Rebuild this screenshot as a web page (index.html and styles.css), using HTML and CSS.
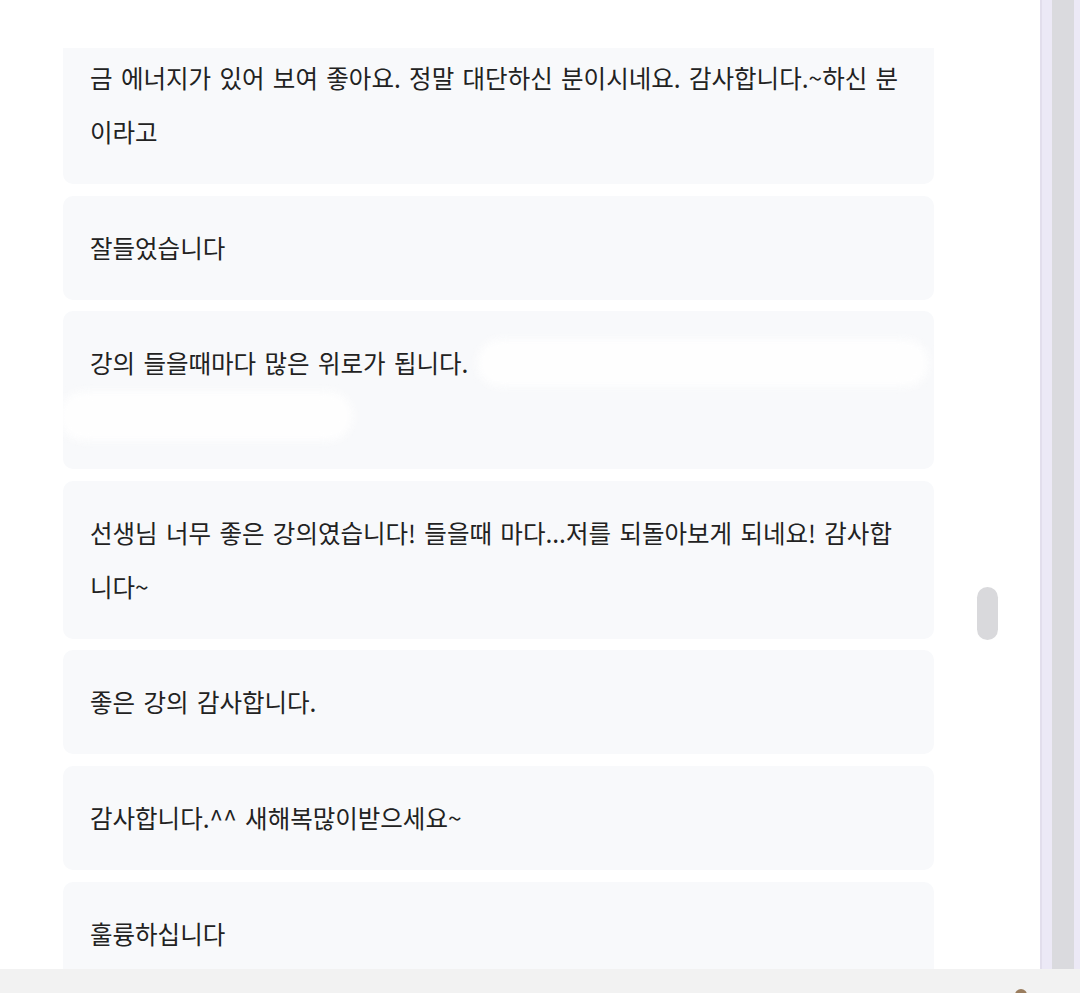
FILE: index.html
```html
<!DOCTYPE html>
<html lang="ko">
<head>
    <meta charset="UTF-8">
    <meta name="viewport" content="width=device-width, initial-scale=1.0">
    <title>수강 후기</title>
    <link rel="stylesheet" href="styles.css">
</head>
<body>
    <div class="screen">
        <div class="top">
            <div class="main">
                <div class="header"></div>
                <div class="feed">
                    <div class="list">
                        <div class="card first">
                            <p>금 에너지가 있어 보여 좋아요. 정말 대단하신 분이시네요. 감사합니다.~하신 분이라고</p>
                        </div>
                        <div class="card">
                            <p>잘들었습니다</p>
                        </div>
                        <div class="card redacted">
                            <p>강의 들을때마다 많은 위로가 됩니다.</p>
                            <div class="blot blot-a"></div>
                            <div class="blot blot-b"></div>
                        </div>
                        <div class="card">
                            <p>선생님 너무 좋은 강의였습니다! 들을때 마다...저를 되돌아보게 되네요! 감사합니다~</p>
                        </div>
                        <div class="card">
                            <p>좋은 강의 감사합니다.</p>
                        </div>
                        <div class="card">
                            <p>감사합니다.^^ 새해복많이받으세요~</p>
                        </div>
                        <div class="card">
                            <p>훌륭하십니다</p>
                        </div>
                    </div>
                </div>
                <div class="thumb"></div>
            </div>
            <div class="side">
                <div class="track"></div>
            </div>
        </div>
        <div class="bottom">
            <span class="dot"></span>
        </div>
    </div>
</body>
</html>
```

FILE: styles.css
```css
* {
    box-sizing: border-box;
}
body {
    margin: 0;
    background: #ffffff;
    font-family: 'Noto Sans CJK KR', 'Noto Sans', sans-serif;
    color: #222222;
}
.screen {
    width: 1080px;
    height: 993px;
    display: flex;
    flex-direction: column;
    overflow: hidden;
}
.top {
    display: flex;
    flex: 1;
    min-height: 0;
}
.main {
    width: 1040px;
    flex-shrink: 0;
    position: relative;
    display: flex;
    flex-direction: column;
}
.header {
    height: 48px;
    background: #ffffff;
}
.feed {
    flex: 1;
    overflow: hidden;
}
.list {
    width: 871px;
    margin: -78px 0 0 63px;
    display: flex;
    flex-direction: column;
    gap: 11.6px;
}
.card {
    position: relative;
    background: #f8f9fb;
    border-radius: 10px;
    padding: 25px 30px 25px 27px;
    overflow: hidden;
}
.card.first {
    padding-top: 81px;
}
.card p {
    margin: 0;
    font-size: 24.5px;
    line-height: 54px;
    word-spacing: 1.5px;
}
.redacted p {
    min-height: 108px;
}
.blot {
    position: absolute;
    background: #fefefe;
    border-radius: 30px;
    filter: blur(5px);
}
.blot-a {
    left: 414px;
    top: 28px;
    width: 452px;
    height: 48px;
}
.blot-b {
    left: -4px;
    top: 80px;
    width: 294px;
    height: 50px;
}
.thumb {
    position: absolute;
    left: 977px;
    top: 587px;
    width: 21px;
    height: 53px;
    border-radius: 11px;
    background: #d9d9dc;
}
.side {
    width: 40px;
    flex-shrink: 0;
    background: #ece9f6;
    border-left: 2px solid #e2deec;
    padding: 0 6px 0 10px;
    display: flex;
}
.track {
    flex: 1;
    background: #dadade;
}
.bottom {
    height: 24px;
    background: #f2f2f2;
    position: relative;
}
.dot {
    position: absolute;
    left: 1015px;
    top: 20px;
    width: 12px;
    height: 12px;
    border-radius: 50%;
    background: #9a7d5e;
}
```
